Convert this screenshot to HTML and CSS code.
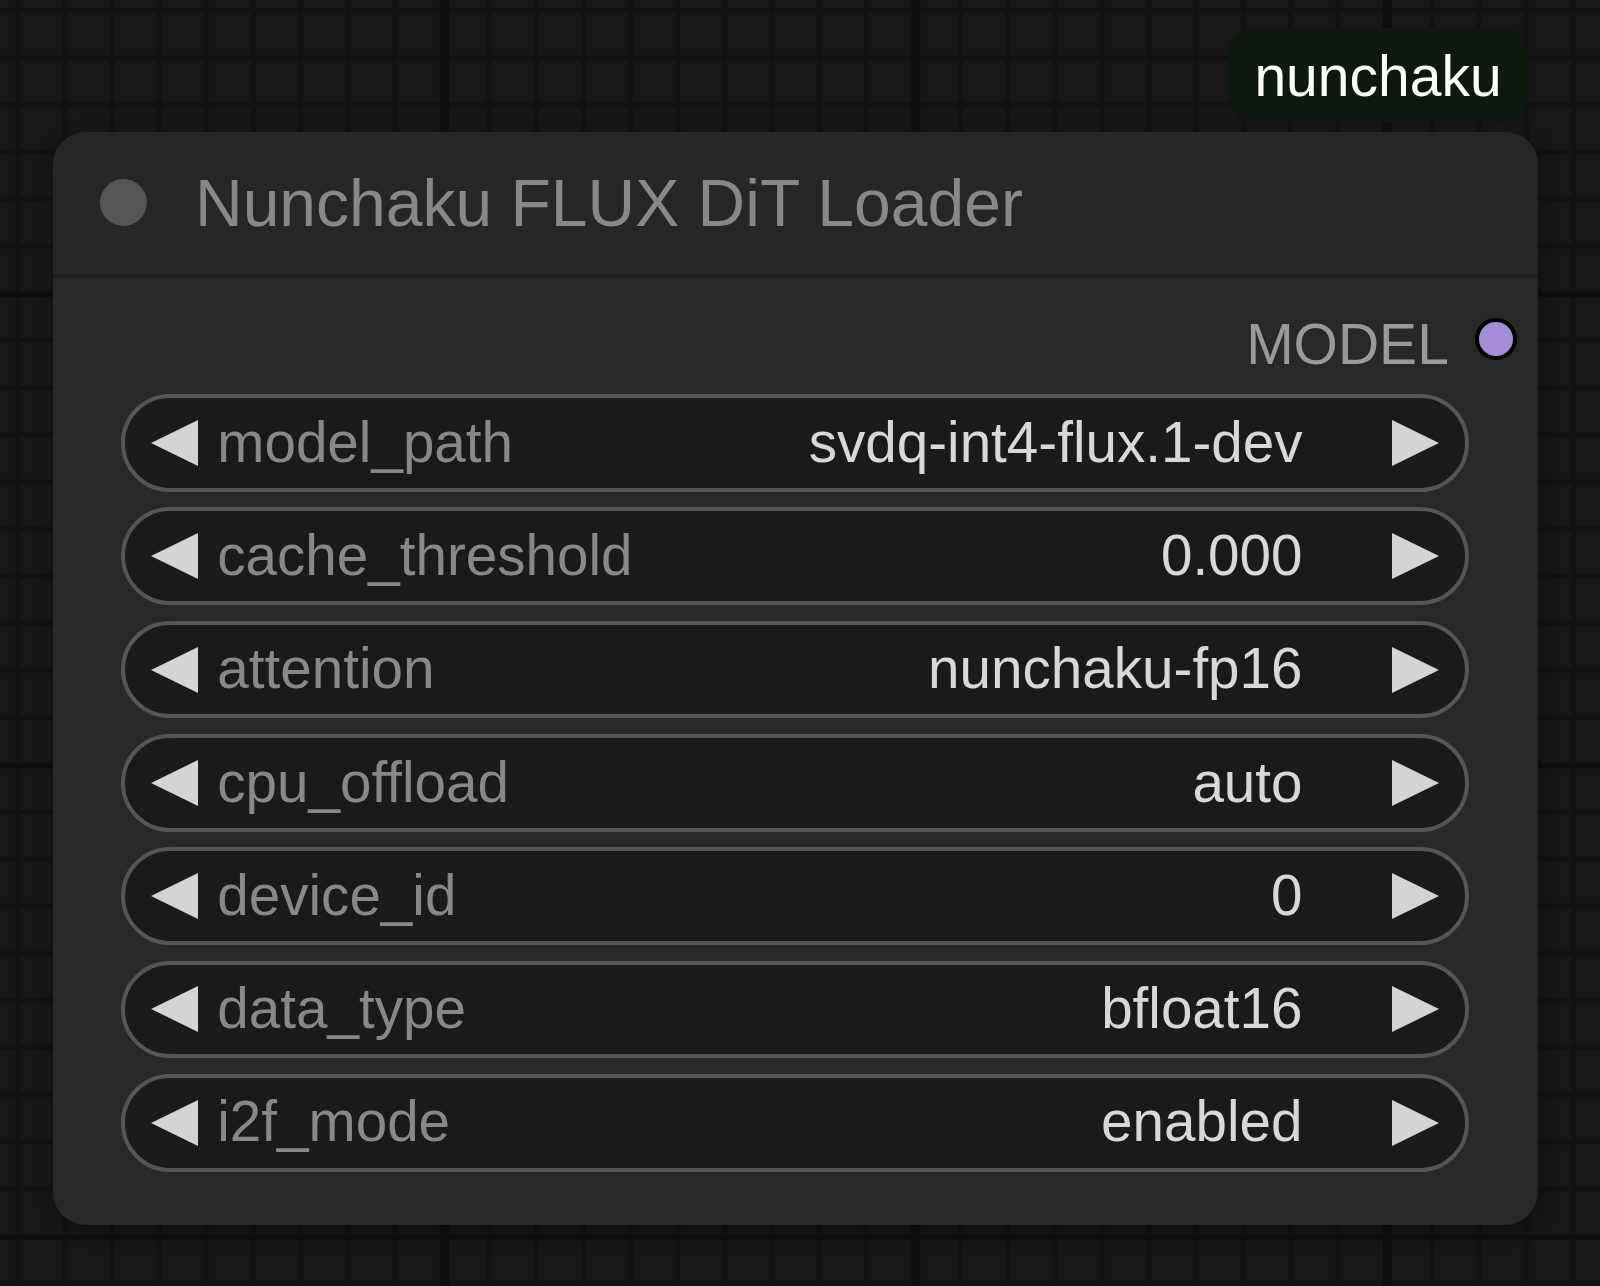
FILE: index.html
```html
<!DOCTYPE html>
<html lang="en">
<head>
<meta charset="utf-8">
<title>Nunchaku FLUX DiT Loader</title>
<link rel="stylesheet" href="styles.css">
</head>
<body>
<div class="canvas">
  <div class="badge">nunchaku</div>
  <div class="node">
    <div class="node-title">
      <span class="title-dot"></span>
      <span class="title-text">Nunchaku FLUX DiT Loader</span>
    </div>
    <div class="node-body">
      <div class="outputs">
        <span class="out-label">MODEL</span>
        <span class="out-dot"></span>
      </div>
      <div class="widgets">
        <div class="widget">
          <svg class="arrow" viewBox="0 0 47 46"><polygon points="0,23 47,0 47,46"/></svg>
          <span class="w-label">model_path</span>
          <span class="w-value">svdq-int4-flux.1-dev</span>
          <svg class="arrow" viewBox="0 0 47 46"><polygon points="0,0 47,23 0,46"/></svg>
        </div>
        <div class="widget">
          <svg class="arrow" viewBox="0 0 47 46"><polygon points="0,23 47,0 47,46"/></svg>
          <span class="w-label">cache_threshold</span>
          <span class="w-value">0.000</span>
          <svg class="arrow" viewBox="0 0 47 46"><polygon points="0,0 47,23 0,46"/></svg>
        </div>
        <div class="widget">
          <svg class="arrow" viewBox="0 0 47 46"><polygon points="0,23 47,0 47,46"/></svg>
          <span class="w-label">attention</span>
          <span class="w-value">nunchaku-fp16</span>
          <svg class="arrow" viewBox="0 0 47 46"><polygon points="0,0 47,23 0,46"/></svg>
        </div>
        <div class="widget">
          <svg class="arrow" viewBox="0 0 47 46"><polygon points="0,23 47,0 47,46"/></svg>
          <span class="w-label">cpu_offload</span>
          <span class="w-value">auto</span>
          <svg class="arrow" viewBox="0 0 47 46"><polygon points="0,0 47,23 0,46"/></svg>
        </div>
        <div class="widget">
          <svg class="arrow" viewBox="0 0 47 46"><polygon points="0,23 47,0 47,46"/></svg>
          <span class="w-label">device_id</span>
          <span class="w-value">0</span>
          <svg class="arrow" viewBox="0 0 47 46"><polygon points="0,0 47,23 0,46"/></svg>
        </div>
        <div class="widget">
          <svg class="arrow" viewBox="0 0 47 46"><polygon points="0,23 47,0 47,46"/></svg>
          <span class="w-label">data_type</span>
          <span class="w-value">bfloat16</span>
          <svg class="arrow" viewBox="0 0 47 46"><polygon points="0,0 47,23 0,46"/></svg>
        </div>
        <div class="widget">
          <svg class="arrow" viewBox="0 0 47 46"><polygon points="0,23 47,0 47,46"/></svg>
          <span class="w-label">i2f_mode</span>
          <span class="w-value">enabled</span>
          <svg class="arrow" viewBox="0 0 47 46"><polygon points="0,0 47,23 0,46"/></svg>
        </div>
      </div>
    </div>
  </div>
</div>
</body>
</html>
```
FILE: styles.css
```css
html, body {
  margin: 0;
  padding: 0;
  background: #171717;
}

.canvas {
  position: relative;
  width: 1600px;
  height: 1286px;
  overflow: hidden;
  font-family: "Liberation Sans", Arial, Helvetica, sans-serif;
  background-color: #171717;
  background-image:
    linear-gradient(90deg, #0e0e0e 8.5px, transparent 8.5px),
    linear-gradient(180deg, #0e0e0e 5px, transparent 5px),
    linear-gradient(90deg, #121212 4.7px, transparent 4.7px),
    linear-gradient(180deg, #121212 4.7px, transparent 4.7px);
  background-size:
    471.5px 100%,
    100% 471.5px,
    47.15px 100%,
    100% 47.15px;
  background-position:
    440px 0,
    0 1235px,
    15.3px 0,
    0 8px;
}

.badge {
  position: absolute;
  left: 1228px;
  top: 28px;
  width: 300px;
  height: 94px;
  border-radius: 26px;
  background: #0e180e;
  color: #ffffff;
  font-size: 57px;
  display: flex;
  align-items: center;
  justify-content: center;
  line-height: 1;
  padding-top: 2px;
  box-sizing: border-box;
}

.node {
  position: absolute;
  left: 53px;
  top: 132px;
  width: 1485px;
  height: 1093px;
  border-radius: 33px;
  background: #282828;
  overflow: hidden;
  box-shadow: 3px 5px 18px rgba(0, 0, 0, 0.35);
  display: flex;
  flex-direction: column;
}

.node-title {
  height: 141.5px;
  flex: none;
  background: #262626;
  border-bottom: 4px solid #1f1f1f;
  display: flex;
  align-items: center;
  padding-left: 46.5px;
}

.title-dot {
  width: 47px;
  height: 47px;
  border-radius: 50%;
  background: #555555;
  flex: none;
}

.title-text {
  margin-left: 48.5px;
  font-size: 66px;
  color: #888888;
  line-height: 1;
  white-space: nowrap;
}

.node-body {
  flex: 1;
  display: flex;
  flex-direction: column;
}

.outputs {
  height: 116.7px;
  box-sizing: border-box;
  padding-top: 38.4px;
  padding-right: 20.7px;
  display: flex;
  justify-content: flex-end;
  align-items: flex-start;
}

.out-label {
  font-size: 57px;
  line-height: 56px;
  height: 56px;
  color: #999999;
}

.out-dot {
  margin-left: 25.8px;
  margin-top: 1.9px;
  width: 42.7px;
  height: 42.7px;
  box-sizing: border-box;
  border-radius: 50%;
  background: #a48dd6;
  border: 4.8px solid #000000;
  flex: none;
}

.widgets {
  display: flex;
  flex-direction: column;
  gap: 15.6px;
  padding: 0 69.4px 0 68.2px;
}

.widget {
  height: 97.7px;
  box-sizing: border-box;
  border: 4.6px solid #555555;
  border-radius: 49px;
  background: #1a1a1a;
  display: flex;
  align-items: center;
  padding: 0 25.4px 0 26.1px;
  font-size: 56.6px;
  line-height: 1;
  white-space: nowrap;
}

.arrow {
  width: 47px;
  height: 46px;
  flex: none;
  fill: #d4d4d4;
}

.w-label {
  flex: 1;
  margin-left: 19px;
  color: #888888;
}

.w-value {
  margin-right: 89.7px;
  color: #d8d8d8;
}
```
